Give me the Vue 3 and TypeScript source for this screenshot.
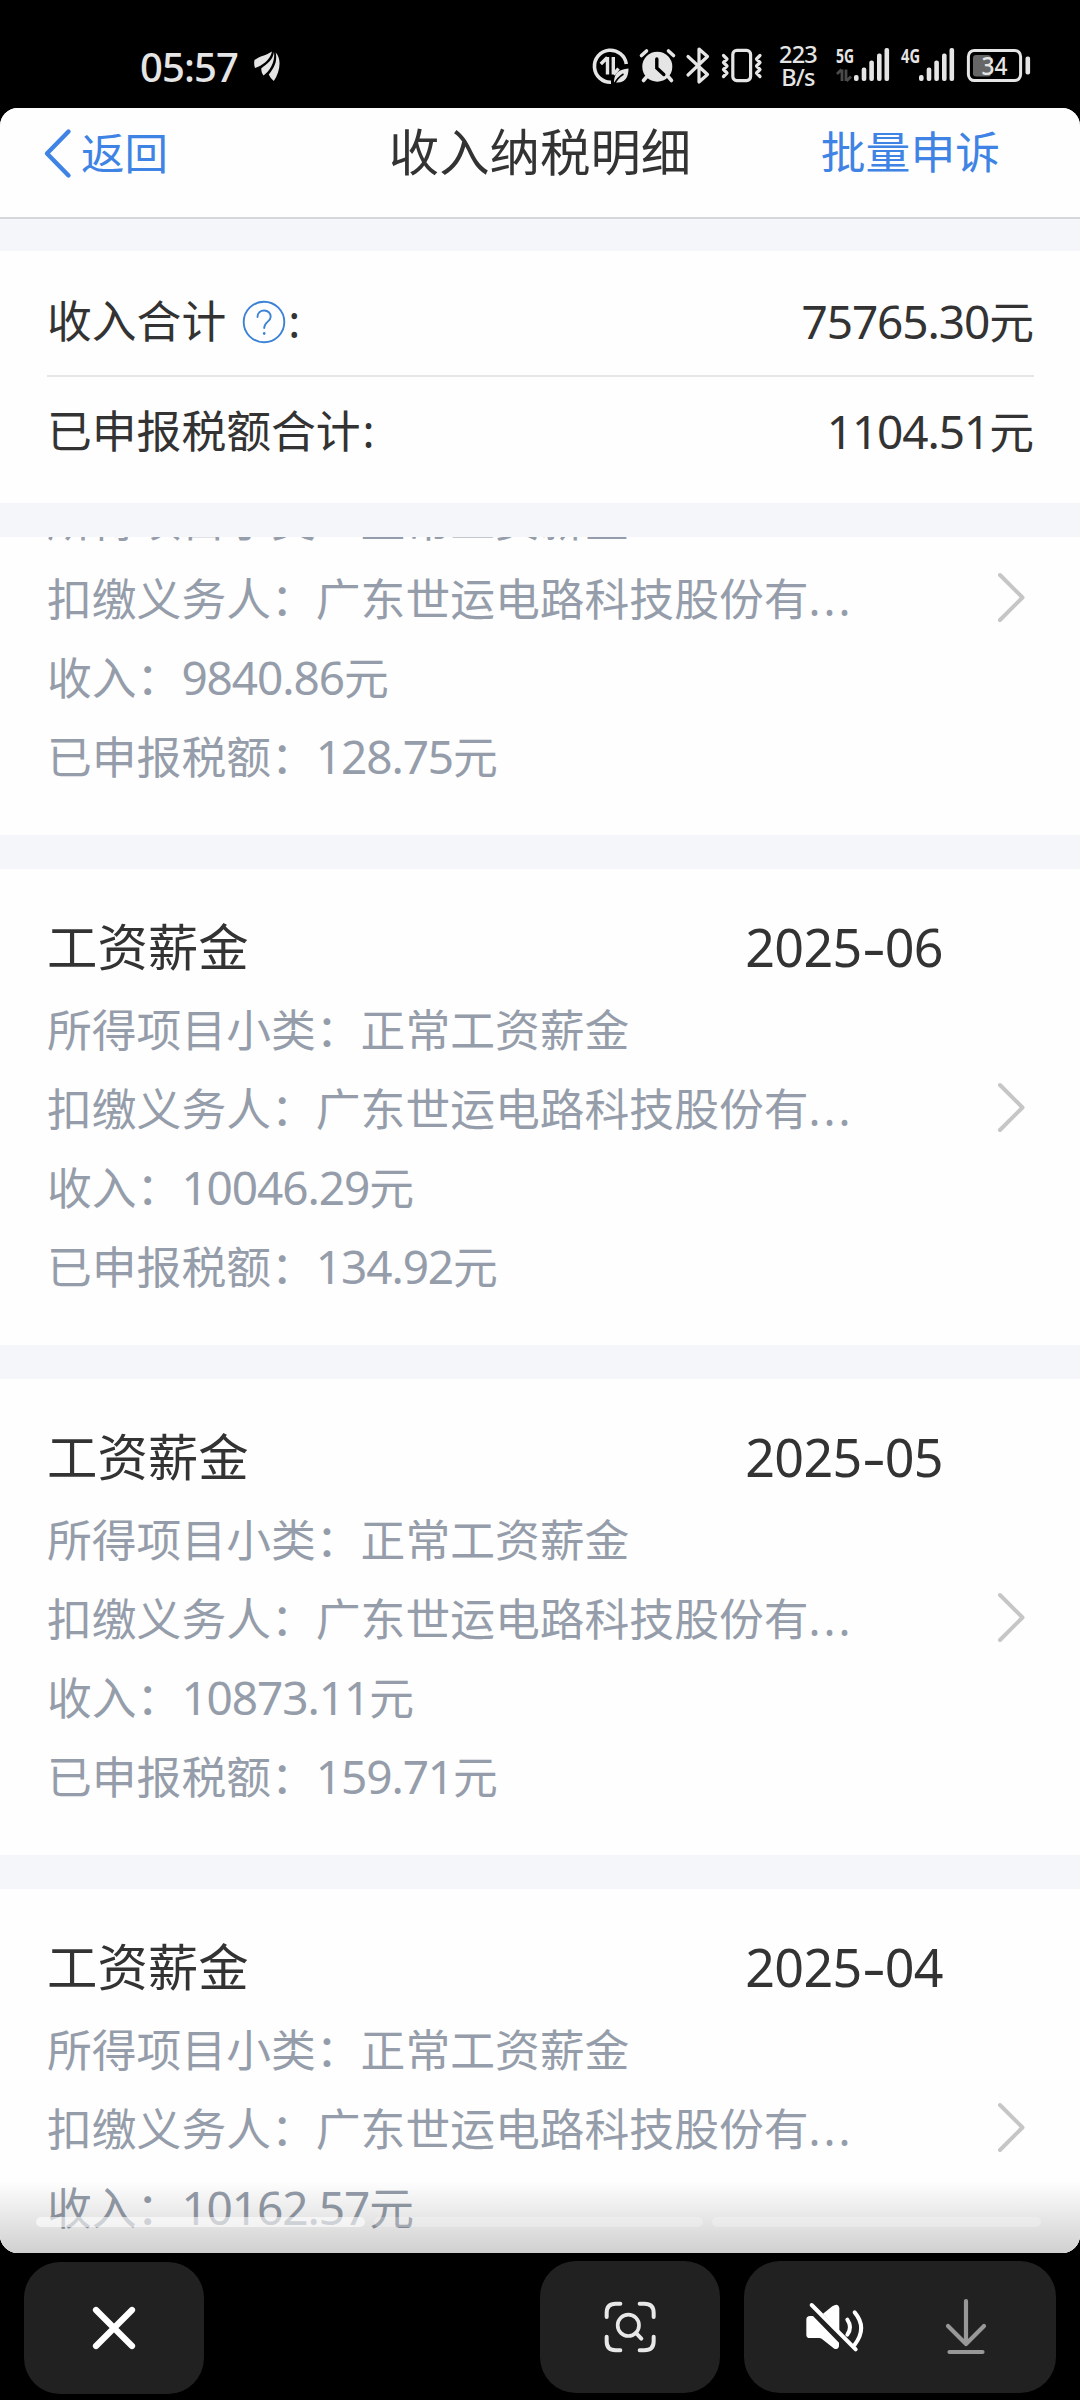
<script setup lang="ts">
interface TaxRecord {
  month: string
  income: string
  tax: string
  scrolled?: boolean
}

const payer = '广东世运电路科技股份有'
const category = '正常工资薪金'

// The first record is partly scrolled out of the list, so its heading is skipped.
const records: TaxRecord[] = [
  { month: '2025-07', income: '9840.86', tax: '128.75', scrolled: true },
  { month: '2025-06', income: '10046.29', tax: '134.92' },
  { month: '2025-05', income: '10873.11', tax: '159.71' },
  { month: '2025-04', income: '10162.57', tax: '' },
]
</script>

<template>
  <div class="phone">
    <div class="status">
      <span class="clock">05:57</span>
      <svg class="wing" width="26" height="30" viewBox="0 0 26 30" fill="#e5e5e5">
        <path d="M18 .5C12 4.500 6 5 .500 9c-.6 3-.4 5.500.5 8C8 14.500 16 9.500 18 .5Z" />
        <path d="M20 .8C19 9.500 12.500 13 7.200 17.500c.2 3 .8 5 2.300 7C15 20.500 21.500 12 20 .8Z" />
        <path d="M21.700 1.500c2 10-2.200 15.500-6.900 22 1.500 3 2.800 4.500 5 6.500C26 21 28 8 21.700 1.500Z" />
      </svg>
      <div class="spacer"></div>
      <svg width="43" height="108" viewBox="590 0 43 108" fill="none" stroke="#e5e5e5" stroke-width="3.600">
        <path d="M611 82.200A16 16 0 1 1 626.300 64" />
        <path d="M607.500 57v17.500M600.800 64l6.500-6.500M613.300 57v17.500M613.500 74.500l5-6" stroke-width="3.400" />
        <path d="M614 82c0-9 5-12.500 14.500-13.500 0 9-4 15-12.500 14Z" fill="#e5e5e5" stroke="none" />
        <path d="M614.500 84c2-4.500 5-7.500 9-10" stroke="#000" stroke-width="1.500" />
      </svg>
      <svg width="47" height="108" viewBox="633 0 47 108">
        <circle cx="657.300" cy="66.700" r="15" fill="#e5e5e5" />
        <g fill="none" stroke="#e5e5e5" stroke-width="3.600" stroke-linecap="round">
          <path d="M641.500 55.500l5-4.500M673.500 55.500l-5-4.500M646.500 77l-3 3.500M668.500 77l3 3.500" />
          <path d="M656.800 59v9l7 6.500" stroke="#000" stroke-width="3.400" />
        </g>
      </svg>
      <svg width="34" height="108" viewBox="680 0 34 108" fill="none" stroke="#e5e5e5" stroke-width="3.200" stroke-linecap="round" stroke-linejoin="round">
        <path d="M688 56.500l19.500 18L699 82V49l8.500 7.500L688 75" />
      </svg>
      <svg width="56" height="108" viewBox="714 0 56 108" fill="none" stroke="#e5e5e5" stroke-width="3.200" stroke-linecap="round" stroke-linejoin="round">
        <rect x="732.800" y="50.400" width="17.800" height="30.200" rx="4" />
        <path d="M723.500 55.500l3.500 3.500-3.500 3.500 3.500 3.500-3.500 3.500 3.500 3.500-3.500 3.500M760 55.500l-3.500 3.500 3.500 3.500-3.500 3.500 3.500 3.500-3.500 3.500 3.500 3.500" />
      </svg>
      <div class="speed"><span>223</span><span>B/s</span></div>
      <svg width="68" height="108" viewBox="826 0 68 108" fill="#e5e5e5">
        <text x="836" y="62.500" class="net" textLength="18" lengthAdjust="spacingAndGlyphs">5G</text>
        <path d="M842 69.500V81M837 74l4.500-4.500M846 69.500V81M846.500 81l4.500-4.500" stroke="#4a4a4a" stroke-width="2.800" />
        <rect x="854" y="75" width="4.600" height="6" rx="2" />
        <rect x="861.700" y="67.500" width="4.600" height="13.500" rx="2" />
        <rect x="869.300" y="60.500" width="4.600" height="20.500" rx="2" />
        <rect x="877" y="53.500" width="4.600" height="27.500" rx="2" />
        <rect x="884.500" y="48" width="4.600" height="33" rx="2" />
      </svg>
      <svg width="66" height="108" viewBox="894 0 66 108" fill="#e5e5e5">
        <text x="901" y="62.500" class="net" textLength="19" lengthAdjust="spacingAndGlyphs">4G</text>
        <rect x="919" y="75" width="4.600" height="6" rx="2" />
        <rect x="926.700" y="67.500" width="4.600" height="13.500" rx="2" />
        <rect x="934.300" y="60.500" width="4.600" height="20.500" rx="2" />
        <rect x="942" y="53.500" width="4.600" height="27.500" rx="2" />
        <rect x="949.500" y="48" width="4.600" height="33" rx="2" />
      </svg>
      <svg width="76" height="108" viewBox="960 0 76 108">
        <rect x="968.400" y="50.400" width="52.200" height="30.200" rx="6" fill="none" stroke="#e5e5e5" stroke-width="3" />
        <rect x="973" y="55" width="18" height="21.500" rx="3" fill="#666" />
        <text x="981.500" y="75" class="level" textLength="26" lengthAdjust="spacingAndGlyphs">34</text>
        <rect x="1025.500" y="56.500" width="4.600" height="18" rx="2" fill="#e5e5e5" />
      </svg>
    </div>

    <div class="page">
      <header class="bar">
        <div class="back">
          <svg width="30" height="52" viewBox="0 0 30 52" fill="none" stroke="#3f84e4" stroke-width="4.400" stroke-linecap="round" stroke-linejoin="round">
            <path d="M25.500 4.500L4 26.500l21.500 22" />
          </svg>
          <span>返回</span>
        </div>
        <h1>收入纳税明细</h1>
        <span class="appeal">批量申诉</span>
      </header>

      <section class="summary">
        <div class="total">
          <span class="label">收入合计</span>
          <svg class="help" width="44" height="44" viewBox="0 0 44 44" fill="none" stroke="#3c83d6" stroke-width="1.900" stroke-linecap="round">
            <circle cx="22" cy="22" r="20.300" />
            <path d="M15.500 17c0-4 3-6.500 6.700-6.500s6.500 2.700 6.500 6.200c0 5-6.500 5-6.500 11.300" />
            <path d="M22.200 33.200v.4" stroke-width="2.600" />
          </svg>
          <span class="label">:</span>
          <span class="amount"><span class="num">75765.30</span>元</span>
        </div>
        <div class="total">
          <span class="label">已申报税额合计<span class="colon">:</span></span>
          <span class="amount"><span class="num">1104.51</span>元</span>
        </div>
      </section>

      <main class="list">
        <article v-for="r in records" :key="r.month" class="card" :class="{ scrolled: r.scrolled }">
          <div v-if="!r.scrolled" class="head">
            <h2>工资薪金</h2>
            <span class="month">{{ r.month.slice(0, 4) }}<i class="dash">-</i>{{ r.month.slice(5) }}</span>
          </div>
          <div class="body">
            <div class="rows">
              <p>所得项目小类：{{ category }}</p>
              <p>扣缴义务人：{{ payer }}<span class="more">...</span></p>
              <p>收入：<span class="num">{{ r.income }}</span>元</p>
              <p v-if="r.tax">已申报税额：<span class="num">{{ r.tax }}</span>元</p>
            </div>
            <svg class="arrow" width="30" height="52" viewBox="0 0 30 52" fill="none" stroke="#c6c6c6" stroke-width="4" stroke-linecap="round" stroke-linejoin="round">
              <path d="M4 4L26.500 26.500 4 49" />
            </svg>
          </div>
        </article>
      </main>

      <div class="shade">
        <i class="seg done"></i>
        <i class="seg"></i>
        <i class="seg"></i>
      </div>
    </div>

    <footer class="tools">
      <div class="tool close">
        <svg width="46" height="46" viewBox="0 0 46 46" fill="none" stroke="#fff" stroke-width="6.200" stroke-linecap="round">
          <path d="M5 5l36 36M41 5L5 41" />
        </svg>
      </div>
      <div class="tool scan">
        <svg width="80" height="75" viewBox="0 0 240 225" fill="none" stroke="#e8e8e8" stroke-width="12" stroke-linecap="round">
          <path d="M50 81V68Q50 41 77 41H91M149 41H163Q191 41 191 68V81M50 140V154Q50 181 77 181H91M149 181H163Q191 181 191 154V140" />
          <circle cx="115" cy="106" r="32" stroke-width="11" />
          <path d="M138 129l16 17" />
        </svg>
      </div>
      <div class="tool pair">
        <svg width="80" height="75" viewBox="0 0 240 225" fill="none" stroke="#fff" stroke-width="12" stroke-linecap="round">
          <path d="M34 89Q34 78 45 78H54L132 158V168Q130 180 118 176L80 146Q77 144 72 144H44Q34 144 34 134Z" fill="#fff" stroke="none" />
          <path d="M84 71L112 49Q130 37 133 55V124Z" fill="#fff" stroke="none" />
          <path d="M50 45L182 178" />
          <path d="M157 89Q173 112 157 134" />
          <path d="M179 67Q218 113 179 164" />
        </svg>
        <svg class="down" width="44" height="60" viewBox="0 0 44 60" fill="none" stroke="#989898" stroke-width="4.200" stroke-linecap="round" stroke-linejoin="round">
          <path d="M22 4v43M4 29l18 18 18-18M5.500 55h33" />
        </svg>
      </div>
    </footer>
  </div>
</template>

<style>
body {
  margin: 0;
  background: #000;
}
</style>

<style scoped>
.phone {
  width: 1080px;
  height: 2400px;
  display: flex;
  flex-direction: column;
  overflow: hidden;
  background: #000;
  font-family: "Noto Sans", "Noto Sans CJK SC", sans-serif;
  color: #333;
}
.phone svg {
  display: block;
  flex: none;
}
.status {
  height: 108px;
  flex: none;
  display: flex;
  align-items: center;
  padding: 0 44px 0 140px;
  color: #e5e5e5;
}
.clock {
  width: 100px;
  font-size: 40px;
  line-height: 50px;
  letter-spacing: -0.9px;
  font-weight: 500;
  white-space: nowrap;
  padding-top: 25px;
}
.wing {
  margin: 24px 0 0 14px;
}
.spacer {
  flex: 1;
}
.speed {
  width: 56px;
  display: flex;
  flex-direction: column;
  align-items: center;
  font-size: 23.5px;
  line-height: 23px;
  font-weight: 500;
  letter-spacing: -0.8px;
  padding-top: 23px;
}
.net {
  font-size: 20px;
  font-weight: 700;
}
.level {
  font-size: 25px;
  font-weight: 500;
  fill: #e5e5e5;
}
.page {
  position: relative;
  height: 2145px;
  flex: none;
  display: flex;
  flex-direction: column;
  overflow: hidden;
  border-radius: 18px;
  background: #f4f6f9;
}
.bar {
  height: 95px;
  flex: none;
  display: grid;
  grid-template-columns: 1fr auto 1fr;
  align-items: start;
  padding: 14px 80px 0 43px;
  border-bottom: 2px solid #d5d7da;
  background: #fefefe;
}
.back {
  display: flex;
  align-items: center;
  height: 62px;
  gap: 8px;
  font-size: 43.5px;
  line-height: 60px;
  color: #3f84e4;
}
h1,
h2,
p {
  margin: 0;
  font-weight: 400;
}
h1 {
  font-size: 50.4px;
  line-height: 60px;
  padding-left: 37px;
}
.appeal {
  justify-self: end;
  font-size: 44.8px;
  line-height: 60px;
  color: #3f84e4;
}
.summary {
  height: 252px;
  flex: none;
  margin: 32px 0 34px;
  padding: 16px 46px 0 47px;
  box-sizing: border-box;
  background: #fefefe;
}
.total {
  display: flex;
  align-items: center;
  height: 108px;
  font-size: 44.8px;
  line-height: 60px;
}
.total:first-child {
  border-bottom: 2px solid #e6e6e6;
}
.help {
  margin: 1px 2px 0 16px;
}
.colon {
  margin-left: 2px;
}
.amount {
  margin-left: auto;
}
.num {
  font-size: 46px;
  letter-spacing: -1.1px;
}
.list {
  flex: 1;
  min-height: 0;
  overflow: hidden;
  background: #f4f6f9;
}
.card {
  height: 476px;
  box-sizing: border-box;
  margin-bottom: 34px;
  padding: 43px 46px 0 47px;
  background: #fefefe;
}
.card.scrolled {
  height: 363px;
  margin-top: -65px;
  padding-top: 0;
}
.head {
  display: flex;
  justify-content: space-between;
  align-items: center;
  height: 70px;
  padding-right: 91px;
}
h2 {
  font-size: 50.4px;
  line-height: 70px;
}
.month {
  font-size: 52px;
  line-height: 70px;
  letter-spacing: -0.6px;
  white-space: nowrap;
}
.dash {
  display: inline-block;
  width: 23px;
  text-align: center;
  font-style: normal;
  transform: scaleX(1.4);
}
.body {
  display: flex;
  justify-content: space-between;
  padding-top: 9px;
}
.rows {
  font-size: 44.8px;
  line-height: 78.7px;
  color: #959daa;
  white-space: nowrap;
}
.rows p {
  height: 78.7px;
}
.more {
  letter-spacing: 3px;
}
.arrow {
  margin: 90px 8px 0 0;
}
.shade {
  position: absolute;
  left: 0;
  right: 0;
  bottom: 0;
  height: 72px;
  box-sizing: border-box;
  display: flex;
  gap: 9px;
  padding: 36px 39px 0 36px;
  background: linear-gradient(to bottom, rgba(0, 0, 0, 0), rgba(0, 0, 0, 0.18));
}
.seg {
  flex: 1;
  height: 10px;
  border-radius: 5px;
  background: rgba(255, 255, 255, 0.25);
}
.seg.done {
  background: rgba(255, 255, 255, 0.6);
}
.tools {
  flex: 1;
  display: flex;
  align-items: flex-start;
  padding: 8px 24px 0;
}
.tool {
  height: 132px;
  border-radius: 36px;
  background: #212121;
  display: flex;
  align-items: center;
  justify-content: center;
}
.close {
  width: 180px;
  margin-top: 1px;
}
.scan {
  width: 180px;
  margin-left: 336px;
}
.pair {
  width: 312px;
  margin-left: 24px;
  justify-content: flex-start;
}
.pair svg:first-child {
  margin-left: 51px;
}
.pair .down {
  margin-left: 69px;
}
</style>
